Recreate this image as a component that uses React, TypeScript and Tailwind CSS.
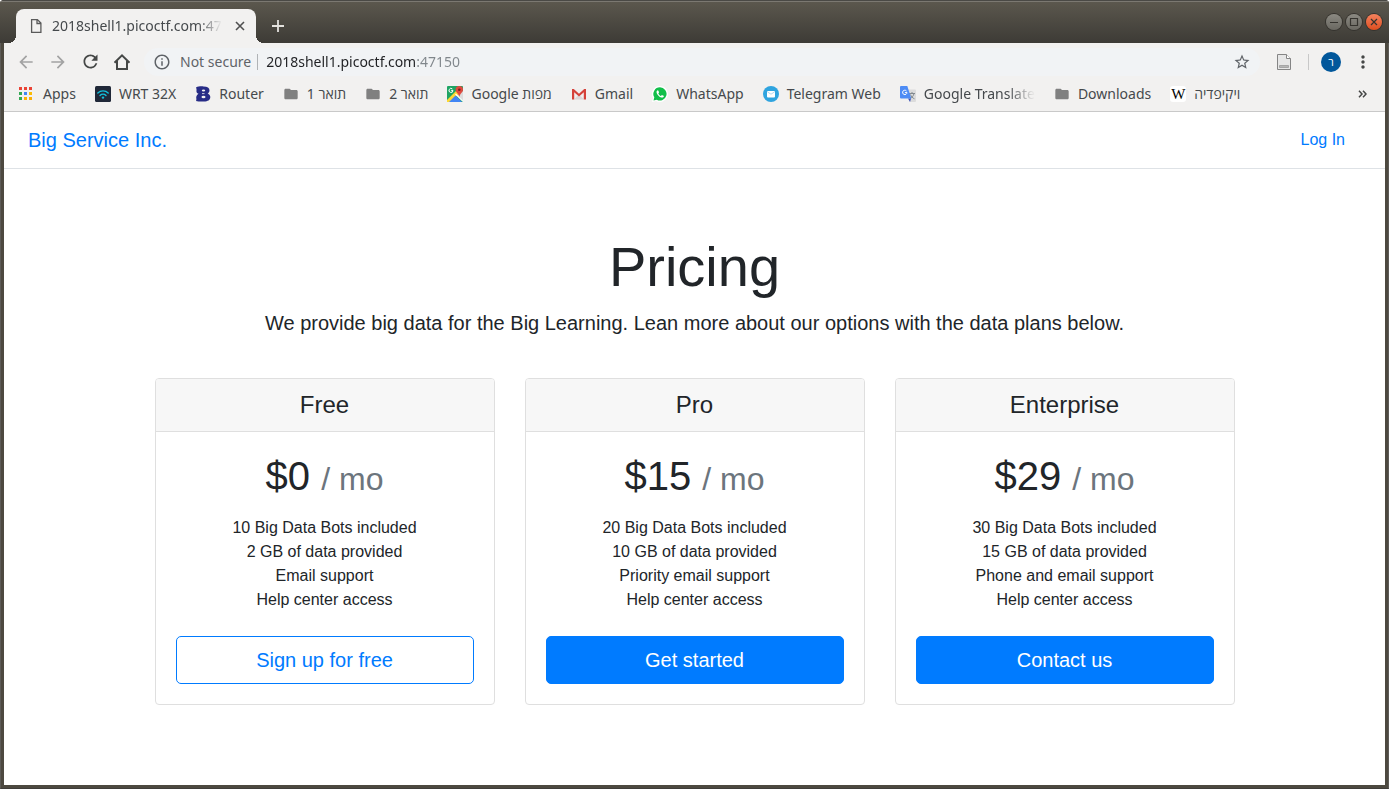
import type { ReactNode } from "react";
import {
  MdArrowBack,
  MdArrowForward,
  MdFolder,
  MdInfoOutline,
  MdMoreVert,
  MdOutlineStarBorder,
  MdRefresh,
} from "react-icons/md";

const folder = <MdFolder className="size-[18px] text-[#808080]" />;

const appsIcon = (
  <svg viewBox="0 0 16 16" className="size-4">
    {["#ea4335", "#ea4335", "#ea4335", "#34a853", "#4285f4", "#fbbc05", "#34a853", "#fbaf05", "#fbaf05"].map(
      (fill, i) => (
        <rect key={i} x={(i % 3) * 5} y={1 + Math.floor(i / 3) * 5} width="3" height="3" fill={fill} />
      ),
    )}
  </svg>
);

const wrtIcon = (
  <svg viewBox="0 0 16 16" className="size-4" fill="none" stroke="#12c0dc" strokeLinecap="round">
    <rect width="16" height="16" rx="1.5" fill="#202838" stroke="none" />
    <path d="M2.8 7a7.4 7.4 0 0 1 10.4 0" strokeWidth="1.4" />
    <path d="M5 9.4a4.3 4.3 0 0 1 6 0" strokeWidth="1.4" />
    <circle cx="8" cy="11.6" r="1.2" fill="#12c0dc" stroke="none" />
  </svg>
);

const routerIcon = (
  <svg viewBox="0 0 16 16" className="size-4">
    <path
      d="M1 1.500C3.500.2 6 .2 8.500.4c4 0 6 1.600 6 4 0 1.500-.8 2.400-1.800 3.100 1.700.8 2.600 2 2.600 3.600 0 3-2.500 4.500-6.300 4.500-3 0-5.500.2-8-.6.6-1.200.4-2.300.2-3.300 0-1.700.9-3 2.300-3.900C1.800 7 1.200 6 1.500 4.500 1.700 3.400 1.500 2.500 1 1.500z"
      fill="#272c86"
    />
    <ellipse cx="8.500" cy="4.600" rx="1.700" ry="1" fill="#f2f1f0" />
    <ellipse cx="8.500" cy="11" rx="2" ry="1.200" fill="#f2f1f0" />
    <path d="M7 7.600h2.500" stroke="#f2f1f0" strokeWidth=".8" />
  </svg>
);

const mapsIcon = (
  <svg viewBox="0 0 16 16" className="size-4">
    <rect width="16" height="16" rx="1" fill="#1fa463" />
    <path d="M8.500 8 16 15V5z" fill="#dcdcdc" />
    <path d="M0 14 11 3l3 3L3 16H0z" fill="#fdd835" />
    <path d="m2 16 6.500-6.500L15 16z" fill="#4285f4" />
    <path d="m8.500 8 7.500 7.300" stroke="#fff" strokeWidth="1.200" />
    <path d="M12.300 0A3.700 3.700 0 0 0 8.600 3.700c0 2.500 3 3.500 3.700 7.300.7-3.800 3.700-4.800 3.700-7.300A3.700 3.700 0 0 0 12.300 0z" fill="#e04a3f" />
    <circle cx="12.300" cy="3.700" r="1.300" fill="#7d1f18" />
    <path d="M5.400 3A2 2 0 1 0 6 4.600H4.200" fill="none" stroke="#fff" />
  </svg>
);

const gmailIcon = (
  <svg viewBox="0 0 16 16" className="size-4">
    <path d="M1.500 3h13v10.500h-13z" fill="#f1eeee" />
    <path d="m3 13.500 5-5 5 5z" fill="#dcd8d8" />
    <path d="M1 13.500V3h1.800L8 7.800 13.200 3H15v10.500h-2.200V6.200L8 10.400 3.200 6.200v7.300z" fill="#d5423a" />
  </svg>
);

const whatsAppIcon = (
  <svg viewBox="0 0 16 16" className="size-4">
    <path d="M8 0a8 8 0 0 0-7 12L0 16l4.100-1A8 8 0 1 0 8 0z" fill="#fff" />
    <path d="M8 1.300a6.600 6.600 0 0 0-5.700 10l-.8 3.200 3.300-.8A6.600 6.600 0 1 0 8 1.300z" fill="#12bf4a" />
    <path
      d="M5.700 4.300c-1 .4-1.400 1.500-1 2.600.8 2.200 2.500 3.900 4.700 4.600 1.100.3 2.300-.2 2.500-1.300 0-.4-1.900-1.300-2.100-1.100l-.8.900C7.800 9.500 6.800 8.600 6.300 7.400l.7-.8c.1-.3-.6-2.300-1.300-2.300z"
      fill="#fff"
    />
  </svg>
);

const telegramIcon = (
  <svg viewBox="0 0 16 16" className="size-4">
    <circle cx="8" cy="8" r="8" fill="#2fa4df" />
    <rect x="4" y="5" width="8" height="6.400" rx="1" fill="#fff" />
    <path d="m4.300 5.800 3.700 2.400 3.700-2.400" fill="none" stroke="#9bd2ef" strokeWidth=".8" />
  </svg>
);

const translateIcon = (
  <svg viewBox="0 0 16 16" className="size-4">
    <path d="M7 3.500h8a1 1 0 0 1 1 1V15a1 1 0 0 1-1 1H10z" fill="#dcdcdc" />
    <path d="M9 7.500h6M12 6v1.500M14 7.500c-.5 2.500-2 4-4 5M10.500 8.500c.7 2 2 3.500 4 4.300" fill="none" stroke="#7a8288" strokeWidth=".9" />
    <path d="M8 12.500h3L10 16z" fill="#3a4fb8" />
    <path d="M1 0h6.300l4 12.500H1a1 1 0 0 1-1-1V1a1 1 0 0 1 1-1z" fill="#4e8cf5" />
    <path d="M6.500 5A2.200 2.200 0 1 0 7 6.600H4.900" fill="none" stroke="#fff" />
  </svg>
);

const wikipediaIcon = (
  <span className="flex size-4 items-center justify-center rounded-[3px] bg-white font-['Liberation_Serif',serif] text-[15px] leading-4 text-black">
    W
  </span>
);

type Bookmark = { label: string; icon: ReactNode; faded?: boolean };

const bookmarks: Bookmark[] = [
  { label: "Apps", icon: appsIcon },
  { label: "WRT 32X", icon: wrtIcon },
  { label: "Router", icon: routerIcon },
  { label: "1 תואר", icon: folder },
  { label: "2 תואר", icon: folder },
  { label: "Google מפות", icon: mapsIcon },
  { label: "Gmail", icon: gmailIcon },
  { label: "WhatsApp", icon: whatsAppIcon },
  { label: "Telegram Web", icon: telegramIcon },
  { label: "Google Translate", icon: translateIcon, faded: true },
  { label: "Downloads", icon: folder },
  { label: "ויקיפדיה", icon: wikipediaIcon },
];

const plans = [
  {
    name: "Free",
    price: "$0",
    features: ["10 Big Data Bots included", "2 GB of data provided", "Email support", "Help center access"],
    action: "Sign up for free",
    outline: true,
  },
  {
    name: "Pro",
    price: "$15",
    features: ["20 Big Data Bots included", "10 GB of data provided", "Priority email support", "Help center access"],
    action: "Get started",
    outline: false,
  },
  {
    name: "Enterprise",
    price: "$29",
    features: ["30 Big Data Bots included", "15 GB of data provided", "Phone and email support", "Help center access"],
    action: "Contact us",
    outline: false,
  },
];

function WindowButton({ label, close, children }: { label: string; close?: boolean; children: ReactNode }) {
  return (
    <button
      aria-label={label}
      className={
        close
          ? "flex size-4 items-center justify-center rounded-full bg-linear-to-b from-[#f4815c] to-[#de4d1c] ring-1 ring-[#35332e]"
          : "flex size-4 items-center justify-center rounded-full bg-linear-to-b from-[#8b8982] to-[#6a6861] ring-1 ring-[#35332e]"
      }
    >
      <svg viewBox="0 0 16 16" className="size-4" fill="none" stroke="#35332e" strokeWidth="1.200">
        {children}
      </svg>
    </button>
  );
}

function TitleBar() {
  return (
    <div className="flex h-[43px] items-end border-t border-[#4a4945] bg-linear-to-b from-[#5c584e] to-[#3d3b36] pr-[7px] pl-4 shadow-[inset_0_1px_0_#7b7871]">
      <div className="relative flex h-[34px] w-60 items-center rounded-t-lg bg-[#f2f1f0] pr-2.5 pl-3">
        <span className="absolute bottom-0 -left-2 size-2 bg-[radial-gradient(circle_at_top_left,transparent_8px,#f2f1f0_8px)]" />
        <span className="absolute -right-2 bottom-0 size-2 bg-[radial-gradient(circle_at_top_right,transparent_8px,#f2f1f0_8px)]" />
        <svg viewBox="0 0 16 16" className="size-4 shrink-0" fill="none" stroke="#5a5a5a" strokeWidth="1.300">
          <path d="M3.600 1.600h5.800l3.500 3.500v9.300H3.600zM9 1.600v3.900h3.900" />
        </svg>
        <span className="ml-2 mask-[linear-gradient(to_right,black_86%,transparent)] text-[14px] leading-5 whitespace-nowrap text-[#45494c]">
          2018shell1.picoctf.com:47
        </span>
        <button aria-label="Close tab" className="ml-auto flex h-4 w-3 items-center justify-center">
          <svg viewBox="0 0 10 10" className="size-2.5" stroke="#505050" strokeWidth="1.600">
            <path d="m1 1 8 8M9 1 1 9" />
          </svg>
        </button>
      </div>
      <button aria-label="New tab" className="ml-4 flex h-[34px] w-3 items-center justify-center">
        <svg viewBox="0 0 12 12" className="size-3" stroke="#e4e2de" strokeWidth="1.800">
          <path d="M6 0v12M0 6h12" />
        </svg>
      </button>
      <div className="ml-auto flex gap-1 self-center">
        <WindowButton label="Minimize">
          <path d="M4 8.500h8" />
        </WindowButton>
        <WindowButton label="Maximize">
          <path d="M4.500 4.500h7v7h-7z" />
        </WindowButton>
        <WindowButton label="Close" close>
          <path d="m5 5 6 6M11 5l-6 6" />
        </WindowButton>
      </div>
    </div>
  );
}

function Toolbar() {
  const button = "flex h-8 w-8 items-center justify-center";
  return (
    <div className="flex h-[37px] items-center bg-[#f2f1f0] pl-1.5 text-[#454746]">
      <button aria-label="Back" className={`${button} text-[#a3a3a3]`}>
        <MdArrowBack className="size-5" />
      </button>
      <button aria-label="Forward" className={`${button} text-[#a3a3a3]`}>
        <MdArrowForward className="size-5" />
      </button>
      <button aria-label="Reload" className={button}>
        <MdRefresh className="size-[21px]" />
      </button>
      <button aria-label="Home" className={button}>
        <svg viewBox="0 0 18 18" className="size-[18px]" fill="none" stroke="currentColor" strokeWidth="2">
          <path d="M1.500 9.800 9 2.300l7.500 7.500M4 8v8h10V8" />
        </svg>
      </button>
      <div className="ml-1.5 flex h-7 grow items-center rounded-full bg-[#f1f3f5] px-[9px] text-[14px]">
        <MdInfoOutline className="size-[18px] shrink-0 text-[#5f6368]" />
        <span className="ml-[9px] leading-5 text-[#5f6368]">Not secure</span>
        <span className="mr-2 ml-1.5 h-4 w-px shrink-0 bg-[#b0b3b6]" />
        <input
          aria-label="Address"
          defaultValue="2018shell1.picoctf.com:47150"
          className="h-6 min-w-0 grow bg-[linear-gradient(to_right,#202124_149px,#80868b_149px)] bg-clip-text leading-5 text-transparent caret-black outline-none"
        />
        <button aria-label="Bookmark this page" className="text-[#5f6368]">
          <MdOutlineStarBorder className="size-[18px]" />
        </button>
      </div>
      <button aria-label="Extension" className="ml-4">
        <svg viewBox="0 0 16 16" className="size-4" fill="none" stroke="#858585">
          <path d="M1.500.5h9l4 4v11h-13z" fill="#e6e6e6" />
          <path d="M10.500.5v4h4" fill="#fff" />
          <path d="M3.500 11.500h9v2h-9z" fill="#b5b5b5" stroke="#a5a5a5" />
        </svg>
      </button>
      <span className="mr-3 ml-4 h-4 w-px bg-[#c8c8c8]" />
      <button
        aria-label="Profile"
        className="flex size-5 items-center justify-center rounded-full bg-[#01579b] text-[11px] leading-4 text-white"
      >
        ר
      </button>
      <button aria-label="Menu" className="mx-3">
        <MdMoreVert className="size-5" />
      </button>
    </div>
  );
}

function BookmarksBar() {
  return (
    <div className="flex h-8 items-center gap-[19px] border-b border-[#c9c9c9] bg-[#f2f1f0] pr-[18px] pb-1 pl-[15px] text-[14px] leading-5 whitespace-nowrap text-[#45494c]">
      {bookmarks.map((b) => (
        <a key={b.label} href="#" className="flex shrink-0 items-center gap-2">
          <span className="flex size-4 items-center justify-center">{b.icon}</span>
          <span className={b.faded ? "mask-[linear-gradient(to_right,black_75%,transparent)]" : ""}>{b.label}</span>
        </a>
      ))}
      <button aria-label="More bookmarks" className="ml-auto">
        <svg viewBox="0 0 9 8" className="h-2 w-[9px]" fill="none" stroke="#454746" strokeWidth="1.500">
          <path d="m1 .8 3 3.200-3 3.200M5 .8 8 4 5 7.200" />
        </svg>
      </button>
    </div>
  );
}

export default function App() {
  return (
    <div className="flex min-h-screen flex-col overflow-hidden rounded-t-[4px] bg-[#4d4940] font-['Noto_Sans','Open_Sans',sans-serif]">
      <TitleBar />
      <div className="flex grow flex-col border-x border-b border-x-[#5d5b57] border-b-[#3f3d3a] px-[3px] pb-[3px]">
        <Toolbar />
        <BookmarksBar />
        <div className="grow bg-white font-['Liberation_Sans',Arial,sans-serif] text-[16px] leading-6 text-[#212529]">
          <header className="flex h-[57px] items-center justify-between border-b border-[#dee2e6] px-6 text-[#007bff]">
            <a href="#" className="text-[20px]">
              Big Service Inc.
            </a>
            <a href="#" className="px-4">
              Log In
            </a>
          </header>
          <main className="mx-auto max-w-[1110px] px-[15px] pt-16 pb-12">
            <div className="text-center">
              <h1 className="text-[56px] leading-[67px]">Pricing</h1>
              <p className="mt-2 text-[20px] leading-[30px]">
                We provide big data for the Big Learning. Lean more about our options with the data plans below.
              </p>
            </div>
            <div className="mt-10 grid grid-cols-3 gap-[30px] text-center">
              {plans.map((plan) => (
                <section key={plan.name} className="overflow-hidden rounded border border-[#dfdfdf]">
                  <h2 className="border-b border-[#dfdfdf] bg-[#f7f7f7] py-3 text-[24px] leading-7">{plan.name}</h2>
                  <div className="p-5">
                    <p className="text-[40px] leading-[48px]">
                      {plan.price} <small className="text-[32px] leading-none text-[#6c757d]">/ mo</small>
                    </p>
                    <ul className="mt-4 mb-6">
                      {plan.features.map((feature) => (
                        <li key={feature}>{feature}</li>
                      ))}
                    </ul>
                    <button
                      className={
                        plan.outline
                          ? "h-12 w-full rounded-[5px] border border-[#007bff] text-[20px] text-[#007bff]"
                          : "h-12 w-full rounded-[5px] border border-[#007bff] bg-[#007bff] text-[20px] text-white"
                      }
                    >
                      {plan.action}
                    </button>
                  </div>
                </section>
              ))}
            </div>
          </main>
        </div>
      </div>
    </div>
  );
}
